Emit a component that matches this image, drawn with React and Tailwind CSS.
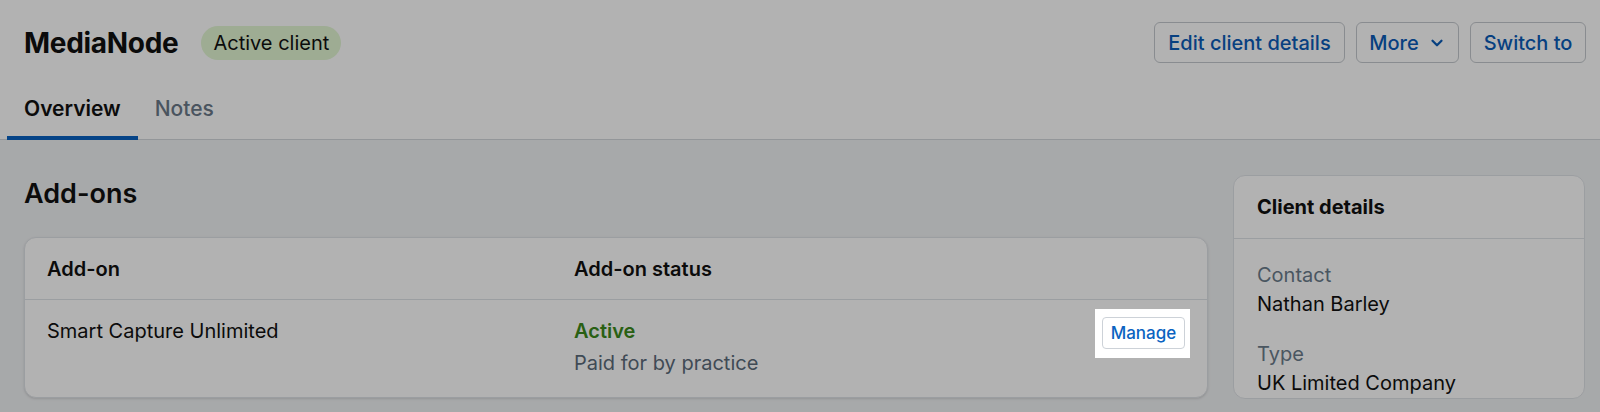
import React from "react";
import { ChevronDown } from "lucide-react";

const tabs = ["Overview", "Notes"];

const ManageButton = () => (
  // spotlighted control, sits above the dimming overlay
  <div className="relative z-20 -my-2 -ml-[7px] -mr-[5px] bg-white pt-2 pb-[9px] pl-[7px] pr-[5px]">
    <button className="h-8 w-[83px] rounded border border-[#cdd2d8] bg-white text-[17px] font-medium text-[#0b63c1]">
      Manage
    </button>
  </div>
);

const App = () => {
  return (
    <div className="relative h-[412px] w-full overflow-hidden bg-[#f0f2f4] font-['Inter',sans-serif] text-[#111]">
      <header className="border-b border-[#d3d7dc] bg-white pl-6 pr-[14px] pt-[22px]">
        <div className="flex h-[41px] items-center justify-between">
          <div className="flex items-center gap-[23px]">
            <h1 className="text-[28px] font-bold tracking-[-0.3px]">MediaNode</h1>
            <span className="rounded-full bg-[#e2f6d3] px-3 py-[3px] text-[20px] leading-7">
              Active client
            </span>
          </div>
          <div className="flex items-center gap-[11px]">
            <button className="h-[41px] w-[191px] rounded-md border border-[#c5c9ce] bg-white text-[20px] font-medium text-[#0b5cb8]">
              Edit client details
            </button>
            <button className="flex h-[41px] w-[103px] items-center justify-center gap-[9px] rounded-md border border-[#c5c9ce] bg-white text-[20px] font-medium text-[#0b5cb8]">
              More
              <ChevronDown size={18} strokeWidth={3} />
            </button>
            <button className="h-[41px] w-[116px] rounded-md border border-[#c5c9ce] bg-white text-[20px] font-medium text-[#0b5cb8]">
              Switch to
            </button>
          </div>
        </div>
        <nav className="-mb-px -ml-[17px] mt-8 flex">
          {tabs.map((t, i) => (
            <div
              key={t}
              className={
                i === 0
                  ? "border-b-4 border-[#0a62c2] px-[17px] pb-[13px] text-[21px] font-semibold leading-7"
                  : "border-b-4 border-transparent px-[17px] pb-[13px] text-[21px] font-medium leading-7 text-[#6a7989]"
              }
            >
              {t}
            </div>
          ))}
        </nav>
      </header>

      <main className="flex gap-[25px] pl-6 pr-[15px] pt-[35px]">
        <section className="flex-1 pt-px">
          <h2 className="mb-[25px] text-[27px] font-semibold leading-9">Add-ons</h2>
          <div className="rounded-xl border border-[#dfe3e7] bg-white shadow-sm">
            <div className="grid h-[62px] grid-cols-[527px_1fr_auto] items-center border-b border-[#dfe3e7] px-[22px] text-[20px] font-semibold">
              <div>Add-on</div>
              <div>Add-on status</div>
              <div />
            </div>
            <div className="grid grid-cols-[527px_1fr_auto] items-start px-[22px] pb-5 pt-[17px] text-[20px] leading-7">
              <div>Smart Capture Unlimited</div>
              <div>
                <div className="font-semibold text-[#3b8a1c]">Active</div>
                <div className="mt-1 text-[#5b6b7a]">Paid for by practice</div>
              </div>
              <ManageButton />
            </div>
          </div>
        </section>

        <aside className="w-[352px] rounded-xl border border-[#dfe3e7] bg-white">
          <div className="flex h-[63px] items-center border-b border-[#dfe3e7] px-[23px] text-[20px] font-bold">
            Client details
          </div>
          <div className="px-[23px] pt-[22px] text-[20px] leading-[29px]">
            <div className="text-[#6b7c8b]">Contact</div>
            <div>Nathan Barley</div>
            <div className="mt-[21px] text-[#6b7c8b]">Type</div>
            <div>UK Limited Company</div>
          </div>
        </aside>
      </main>

      <div className="absolute inset-0 z-10 bg-black/30" />
    </div>
  );
};

export default App;
